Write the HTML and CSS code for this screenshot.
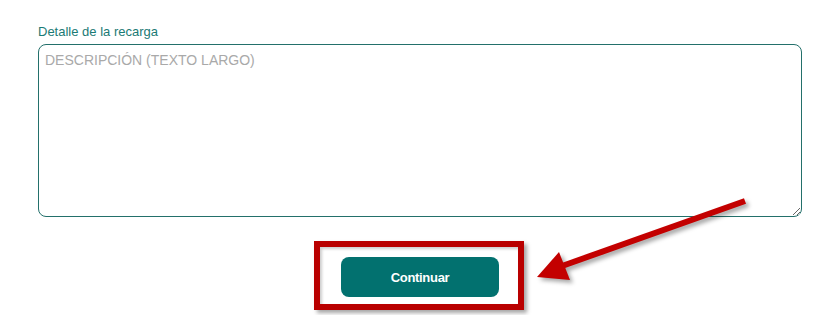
FILE: index.html
```html
<!DOCTYPE html>
<html lang="es">
<head>
<meta charset="utf-8">
<title>Detalle de la recarga</title>
<link rel="stylesheet" href="styles.css">
</head>
<body>
<div class="page">
  <form class="form">
    <label class="label" for="detalle">Detalle de la recarga</label>
    <textarea id="detalle" class="field" placeholder="DESCRIPCIÓN (TEXTO LARGO)"></textarea>
    <div class="actions">
      <button type="button" class="btn">Continuar</button>
    </div>
  </form>
  <div class="highlight"></div>
  <svg class="arrow" width="835" height="315" viewBox="0 0 835 315">
    <line x1="745" y1="201" x2="562" y2="266" stroke="#c30000" stroke-width="6" stroke-linecap="butt"/>
    <polygon points="537,277 559,252 570,280" fill="#c30000"/>
  </svg>
</div>
</body>
</html>
```

FILE: styles.css
```css
html, body {
  margin: 0;
  padding: 0;
  background: #ffffff;
}

.page {
  position: relative;
  width: 835px;
  height: 315px;
  overflow: hidden;
  font-family: "Liberation Sans", Arial, sans-serif;
}

.form {
  display: flex;
  flex-direction: column;
  width: 764px;
  padding: 24px 0 0 38px;
}

.label {
  font-size: 13px;
  line-height: 16px;
  color: #1b7a75;
  margin-bottom: 4px;
}

.field {
  box-sizing: border-box;
  width: 764px;
  height: 173px;
  margin: 0;
  padding: 7px 6px;
  border: 1px solid #23706b;
  border-radius: 8px;
  font-family: "Liberation Sans", Arial, sans-serif;
  font-size: 14px;
  line-height: 16px;
  color: #333;
  background: #fff;
  outline: none;
}

.field::placeholder {
  color: #a9a9a9;
}

.actions {
  display: flex;
  justify-content: center;
  margin-top: 40px;
}

.btn {
  width: 158px;
  height: 40px;
  border: none;
  border-radius: 8px;
  background: #02716f;
  color: #ffffff;
  font-family: "Liberation Sans", Arial, sans-serif;
  font-weight: bold;
  font-size: 13px;
  letter-spacing: -0.3px;
  cursor: pointer;
}

.highlight {
  position: absolute;
  left: 314px;
  top: 241px;
  width: 198px;
  height: 57px;
  border: 6px solid #b90000;
  box-shadow: 3px 3px 4px rgba(0, 0, 0, 0.35), inset 2px 2px 3px rgba(0, 0, 0, 0.2);
}

.arrow {
  position: absolute;
  left: 0;
  top: 0;
  filter: drop-shadow(3px 3px 2px rgba(0, 0, 0, 0.35));
}
```
